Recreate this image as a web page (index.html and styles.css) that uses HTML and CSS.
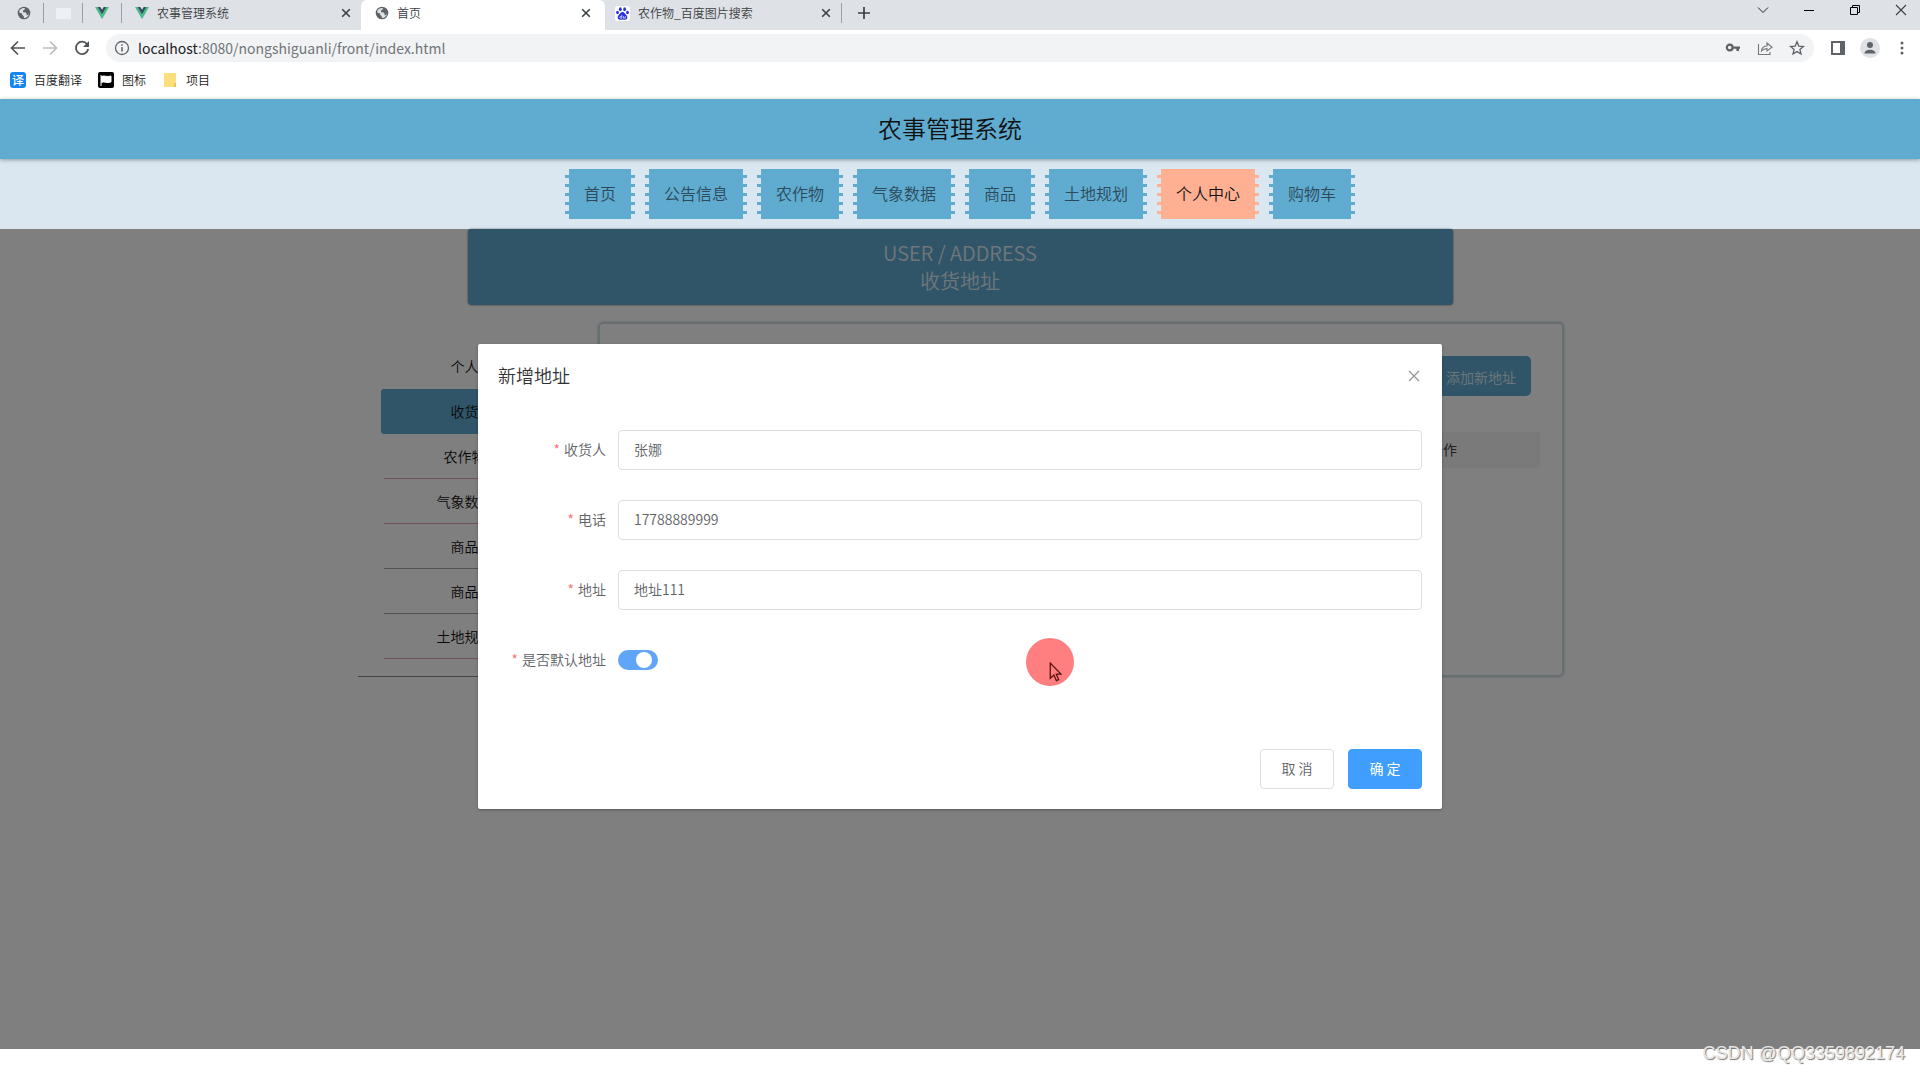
FILE: index.html
```html
<!DOCTYPE html>
<html lang="zh-CN">
<head>
<meta charset="utf-8">
<meta name="viewport" content="width=device-width, initial-scale=1">
<title>首页</title>
<link rel="stylesheet" href="styles.css">
</head>
<body>
<svg class="defs" aria-hidden="true">
  <symbol id="globe" viewBox="0 0 16 16"><circle cx="8" cy="8" r="7.2" fill="#5f6368"/><path d="M2.6 5.5C4 3 6.500 2 9 2.400L8.600 4.200 6.800 5.200 7 7 10 7.400 11.200 9 10.500 10.500 12.500 10.200 13.600 8.500C13.500 11.500 11 13.700 8 13.700L7.600 11.500 6 10.300 5.800 8.300 3 8z" fill="#dee1e6"/></symbol>
  <symbol id="vue" viewBox="0 0 16 16"><path d="M0 1h16L8 15z" fill="#4dba8b"/><path d="M3.200 1h9.600L8 9.500z" fill="#35495e"/><path d="M6 1h4L8 4.300z" fill="#dee1e6"/></symbol>
  <symbol id="close" viewBox="0 0 10 10"><path d="M1.200 1.200l7.600 7.600M8.800 1.200L1.200 8.800" stroke="currentColor" stroke-width="1.600" fill="none"/></symbol>
  <symbol id="thin-close" viewBox="0 0 12 12"><path d="M1 1l10 10M11 1L1 11" stroke="currentColor" stroke-width="1.100" fill="none"/></symbol>
</svg>

<header class="browser">
  <div class="tabs">
    <div class="tab pinned"><svg class="icon"><use href="#globe"/></svg></div>
    <div class="tab pinned"><span class="faded"></span></div>
    <div class="tab pinned"><svg class="icon"><use href="#vue"/></svg></div>
    <div class="tab"><svg class="icon"><use href="#vue"/></svg><span class="tab-title">农事管理系统</span><button class="tab-close" aria-label="关闭"><svg><use href="#close"/></svg></button></div>
    <div class="tab active"><svg class="icon"><use href="#globe"/></svg><span class="tab-title">首页</span><button class="tab-close" aria-label="关闭"><svg><use href="#close"/></svg></button></div>
    <div class="tab last"><svg class="icon" viewBox="0 0 16 16"><rect width="16" height="16" rx="3" fill="#fff"/><g fill="#2932e1"><ellipse cx="5.700" cy="3.500" rx="1.500" ry="2.100"/><ellipse cx="10.300" cy="3.500" rx="1.500" ry="2.100"/><ellipse cx="2.700" cy="7" rx="1.500" ry="1.900"/><ellipse cx="13.300" cy="7" rx="1.500" ry="1.900"/><path d="M8 6.500c1.800 0 2.500 1.800 4 3.200 2 2 1.200 5-1.200 5-1 0-1.800-.4-2.800-.4s-1.800.4-2.800.4c-2.400 0-3.200-3-1.200-5C5.500 8.300 6.200 6.500 8 6.500z"/></g><path d="M7.200 9.500v3.500H6.100a.9.900 0 010-1.900h1.100M9 10.800V13h2v-2.200" stroke="#fff" stroke-width=".7" fill="none"/></svg><span class="tab-title">农作物_百度图片搜索</span><button class="tab-close" aria-label="关闭"><svg><use href="#close"/></svg></button></div>
    <button class="new-tab" aria-label="新标签页"><svg viewBox="0 0 12 12"><path d="M6 0v12M0 6h12" stroke="#3c4043" stroke-width="1.700"/></svg></button>
    <div class="window-buttons">
      <button aria-label="搜索标签页"><svg viewBox="0 0 12 12"><path d="M1 3.500l5 5 5-5" stroke="#222" fill="none"/></svg></button>
      <button aria-label="最小化"><svg viewBox="0 0 12 12"><path d="M1 6.500h10" stroke="#000"/></svg></button>
      <button aria-label="还原"><svg viewBox="0 0 12 12"><path d="M1.500 3.500h7v7h-7zM3.500 3.500v-2h7v7h-2" stroke="#000" fill="none"/></svg></button>
      <button aria-label="关闭窗口"><svg><use href="#thin-close"/></svg></button>
    </div>
  </div>
  <div class="toolbar">
    <button class="tool" aria-label="后退"><svg viewBox="0 0 16 16"><path d="M15 8H2M8 1.500L1.500 8 8 14.500" stroke="#4f5357" stroke-width="1.700" fill="none"/></svg></button>
    <button class="tool" aria-label="前进"><svg viewBox="0 0 16 16"><path d="M1 8h13M8 1.500L14.500 8 8 14.500" stroke="#bcbec1" stroke-width="1.700" fill="none"/></svg></button>
    <button class="tool" aria-label="重新加载"><svg viewBox="0 0 16 16"><path d="M13.300 4.500A6.200 6.200 0 1 0 14.200 9" stroke="#4f5357" stroke-width="1.800" fill="none"/><path d="M15 1v6H9z" fill="#4f5357"/></svg></button>
    <div class="omnibox">
      <svg class="info" viewBox="0 0 16 16"><circle cx="8" cy="8" r="6.500" stroke="#5f6368" stroke-width="1.300" fill="none"/><path d="M8 7v4.500M8 4.200v1.600" stroke="#5f6368" stroke-width="1.500"/></svg>
      <span class="url"><span class="host">localhost</span>:8080/nongshiguanli/front/index.html</span>
      <button class="tool" aria-label="密码"><svg viewBox="0 0 16 16"><circle cx="4.700" cy="7.500" r="2.900" stroke="#5f6368" stroke-width="2.200" fill="none"/><path d="M7.500 6.400H15v2.400h-1V11h-2.600V8.800H7.500z" fill="#5f6368"/></svg></button>
      <button class="tool" aria-label="分享"><svg viewBox="0 0 16 16"><path d="M1.500 4v10.500H13V12M4.500 11c.3-3.500 2.300-5 5.500-5V3l5 4.300L10 11V8.600c-2.500 0-4 .6-5.500 2.400z" stroke="#777" stroke-width="1.100" fill="none"/></svg></button>
      <button class="tool" aria-label="收藏"><svg viewBox="0 0 16 16"><path d="M8 1.800l1.800 4.300 4.600.4-3.500 3 1.100 4.500-4-2.400L4 14l1.100-4.500-3.500-3 4.600-.4z" stroke="#5f6368" stroke-width="1.300" fill="none"/></svg></button>
    </div>
    <button class="tool" aria-label="侧边栏"><svg viewBox="0 0 16 16"><path d="M1 1h14v14H1zM3 3v10h7V3z" fill="#5f6368" fill-rule="evenodd"/></svg></button>
    <button class="tool avatar" aria-label="用户"><svg viewBox="0 0 16 16"><circle cx="8" cy="5" r="3" fill="#5f6368"/><path d="M2.500 13.500c0-5 11-5 11 0z" fill="#5f6368"/></svg></button>
    <button class="tool" aria-label="菜单"><svg viewBox="0 0 16 16"><g fill="#5f6368"><circle cx="8" cy="3" r="1.500"/><circle cx="8" cy="8" r="1.500"/><circle cx="8" cy="13" r="1.500"/></g></svg></button>
  </div>
  <nav class="bookmarks">
    <a href="#"><span class="badge">译</span>百度翻译</a>
    <a href="#"><svg class="icon" viewBox="0 0 16 16"><rect width="16" height="16" rx="2" fill="#000"/><path d="M3 3v11M3.500 4.500c3-1.500 5 1 9.500-.5v6c-4.500 1.500-6.500-1-9.500.5z" stroke="#fff" fill="#fff"/></svg>图标</a>
    <a href="#"><svg class="icon" viewBox="0 0 16 16"><path d="M2 1h12v14H2z" fill="#fbdf7c"/><path d="M12 11h2v4h-2z" fill="#e8c558"/></svg>项目</a>
  </nav>
</header>

<div class="site-title">农事管理系统</div>
<nav class="site-nav">
  <a href="#">首页</a>
  <a href="#">公告信息</a>
  <a href="#">农作物</a>
  <a href="#">气象数据</a>
  <a href="#">商品</a>
  <a href="#">土地规划</a>
  <a href="#" class="current">个人中心</a>
  <a href="#">购物车</a>
</nav>

<main class="frame">
  <div class="banner"><div>USER / ADDRESS</div><div>收货地址</div></div>
  <div class="content">
    <aside class="sidebar">
      <a href="#" class="plain">个人中心</a>
      <a href="#" class="current">收货地址</a>
      <a href="#">农作物收藏</a>
      <a href="#">气象数据收藏</a>
      <a href="#" class="gray">商品订单</a>
      <a href="#" class="gray">商品收藏</a>
      <a href="#">土地规划收藏</a>
    </aside>
    <section class="panel">
      <button class="add">添加新地址</button>
      <table class="addresses">
        <thead><tr><th>收货人</th><th>电话</th><th>地址</th><th>默认地址</th><th class="action">操作</th></tr></thead>
      </table>
    </section>
  </div>

  <div class="overlay">
    <form class="dialog" role="dialog" aria-labelledby="dialog-title">
      <div class="dialog-head">
        <h2 id="dialog-title">新增地址</h2>
        <button type="button" class="dialog-close" aria-label="关闭"><svg><use href="#thin-close"/></svg></button>
      </div>
      <div class="row"><label for="name">收货人</label><input id="name" type="text" value="张娜"></div>
      <div class="row"><label for="phone">电话</label><input id="phone" type="text" value="17788889999"></div>
      <div class="row"><label for="address">地址</label><input id="address" type="text" value="地址111"></div>
      <div class="row"><label for="default">是否默认地址</label><input id="default" class="switch" type="checkbox" checked></div>
      <div class="dialog-foot">
        <button type="button">取 消</button>
        <button type="button" class="primary">确 定</button>
      </div>
      <div class="pointer"><svg viewBox="0 0 12 19"><path d="M1 1v14.500l3.500-3.200 2.300 5.400 2.200-1-2.300-5.200h4.500z" fill="#ff7f80" stroke="#5a1010" stroke-width="1.200"/></svg></div>
    </form>
  </div>
</main>
<footer class="page-end"><span class="watermark">CSDN @QQ3359892174</span></footer>
</body>
</html>
```
FILE: styles.css
```css
* { box-sizing: border-box; }

body {
  margin: 0;
  min-height: 100vh;
  display: flex;
  flex-direction: column;
  background: #fff;
  color: #222;
  font: 350 14px/20px "Noto Sans CJK SC", "Noto Sans", sans-serif;
}

a { color: inherit; text-decoration: none; }
button { border: 0; padding: 0; background: none; font: inherit; color: inherit; }
svg { display: block; }
.defs { position: absolute; width: 0; height: 0; }
.icon { width: 16px; height: 16px; flex: none; }

/* Browser window */
.browser { height: 99px; font-size: 12px; }

.tabs { display: flex; height: 30px; padding: 0 5px; background: #dee1e6; color: #3c4043; }
.tab {
  display: flex;
  align-items: center;
  gap: 8px;
  width: 239px;
  height: 26px;
  padding: 0 10px 0 13px;
  line-height: 26px;
}
.tab .icon { width: 14px; height: 14px; }
.tab-title { flex: 1; white-space: nowrap; }
.tab-close svg { width: 10px; height: 10px; }
.pinned { width: 39px; padding: 0 12px; background: linear-gradient(#9a9da2, #9a9da2) right center / 1px 20px no-repeat; }
.faded { width: 15px; height: 11px; background: #eef0f3; }
.active { width: 244px; height: 30px; padding: 0 14px 4px; background: #fff; border-radius: 6px 6px 0 0; }
.last { width: 237px; padding: 0 11px 0 10px; background: linear-gradient(#9a9da2, #9a9da2) right center / 1px 20px no-repeat; }
.last .icon { width: 15px; height: 15px; }
.new-tab { padding: 0 16px; height: 26px; }
.new-tab svg { width: 12px; height: 12px; }
.window-buttons { display: flex; height: 20px; gap: 34px; margin-left: auto; padding-right: 8px; }
.window-buttons svg { width: 12px; height: 12px; }

.toolbar { display: flex; align-items: center; gap: 16px; height: 36px; padding: 0 10px; }
.tool svg { width: 16px; height: 16px; }
.omnibox {
  flex: 1;
  display: flex;
  align-items: center;
  gap: 16px;
  height: 28px;
  padding: 0 9px 0 8px;
  border-radius: 14px;
  background: #f1f3f4;
}
.info { width: 16px; height: 16px; }
.url { flex: 1; margin-left: -8px; font-size: 14px; line-height: 28px; font-weight: 400; color: #70757a; }
.host { color: #202124; }
.avatar { padding: 2px; margin: 0 -2px; border-radius: 50%; background: #dfe1e6; }

.bookmarks { display: flex; gap: 16px; padding: 4px 10px; }
.bookmarks a { display: flex; align-items: center; gap: 8px; }
.badge { width: 16px; height: 16px; border-radius: 3px; background: #1585f5; color: #fff; font-weight: 500; line-height: 16px; text-align: center; }

/* Site header */
.site-title {
  position: relative;
  height: 60px;
  padding-right: 20px;
  background: #60abd0;
  box-shadow: 0 1px 4px rgba(0, 0, 0, .35);
  color: #111;
  font-size: 24px;
  line-height: 58px;
  text-align: center;
}
.site-nav { display: flex; justify-content: center; gap: 10px; height: 70px; padding: 10px; background: #dbe7f0; }
.site-nav a {
  --fill: #60abd0;
  padding: 0 19px;
  background:
    linear-gradient(var(--fill), var(--fill)) center / calc(100% - 8px) 100% no-repeat,
    repeating-linear-gradient(transparent 0 6px, var(--fill) 6px 9px) 0 0 / 100% 45px no-repeat;
  color: #2c4a59;
  font-size: 16px;
  line-height: 48px;
}
.site-nav .current { --fill: #ffb093; color: #111; }

/* Framed page */
.frame { position: relative; flex: 1; padding-bottom: 40px; }
.banner {
  max-width: 985px;
  height: 76px;
  margin: 0 auto 17px;
  padding: 10px;
  border-radius: 4px;
  background: #60abd0;
  box-shadow: 0 0 2px #555;
  color: #fffc;
  font-size: 20px;
  line-height: 28px;
  text-align: center;
}
.content { display: flex; max-width: 1208px; margin: 0 auto; padding-left: 2px; }
.sidebar { width: 240px; padding: 22px 22px 17px 23px; border-bottom: 1px solid #888; text-align: center; color: #111; }
.sidebar a { display: block; height: 45px; margin: 0 3px; border-bottom: 1px solid #e5a5ad; line-height: 44px; }
.sidebar .plain { border-bottom-color: transparent; }
.sidebar .gray { border-bottom-color: #aaa0a4; }
.sidebar .current { margin: 0; border: 0; border-radius: 3px; background: #60abd0; }
.panel { flex: 1; min-height: 355px; padding: 32px 22px; border: 2px solid #cddce0; border-radius: 5px; box-shadow: 0 0 3px #bccdd2; }
.add { display: block; height: 40px; margin: 0 9px 36px auto; padding: 2px 15px 0; border-radius: 5px; background: #60abd0; color: #fffc; }
.addresses { width: 100%; border-collapse: collapse; table-layout: fixed; background: #f5f5f5; }
.addresses th { height: 36px; padding: 0 0 2px; font-weight: 400; color: #444; }
.addresses .action { width: 194px; }

/* Dialog */
.overlay { position: absolute; inset: 0; padding-top: 115px; background: rgba(0, 0, 0, .5); }
.dialog {
  position: relative;
  max-width: 964px;
  margin: 0 auto;
  padding: 20px;
  border-radius: 2px;
  background: #fff;
  box-shadow: 0 1px 3px rgba(0, 0, 0, .3);
  color: #606266;
}
.dialog-head { display: flex; justify-content: space-between; align-items: center; height: 24px; margin-bottom: 42px; }
.dialog h2 { margin: 0; padding-bottom: 2px; font-size: 18px; line-height: 24px; font-weight: inherit; color: #303133; }
.dialog-close { padding: 2px; color: #909399; }
.dialog-close svg { width: 12px; height: 12px; }
.row { display: flex; align-items: center; height: 40px; margin-bottom: 30px; }
.row label { width: 120px; padding: 0 12px 2px 0; text-align: right; }
.row label::before { content: "*"; margin-right: 4px; color: #f56c6c; }
.row input[type="text"] { flex: 1; height: 40px; padding: 0 15px 2px; border: 1px solid #dcdfe6; border-radius: 4px; font: inherit; color: #606266; }
.row .switch { appearance: none; display: flex; justify-content: flex-end; width: 40px; height: 20px; margin: 0; padding: 2px 6px; border-radius: 10px; background: #60a5f8; }
.switch::before { content: ""; width: 16px; height: 16px; border-radius: 50%; background: #fff; }
.dialog-foot { display: flex; justify-content: flex-end; gap: 14px; margin-top: 69px; }
.dialog-foot button { width: 74px; height: 40px; padding-bottom: 2px; border: 1px solid #dcdfe6; border-radius: 4px; }
.dialog-foot .primary { border-color: #409eff; background: #409eff; color: #fff; font-weight: 400; }

/* Click highlight round the mouse pointer */
.pointer { position: absolute; left: 548px; top: 294px; width: 48px; height: 48px; padding: 24px 0 0 23px; border-radius: 50%; background: #ff7f80; }
.pointer svg { width: 13px; height: 20px; }

.page-end { position: relative; height: 23px; }
.watermark {
  position: absolute;
  right: 15px;
  bottom: 7px;
  color: #e6e6e6;
  font: 18px/24px "Liberation Sans", sans-serif;
  text-shadow: 1px 1px 1px #777;
}
```
